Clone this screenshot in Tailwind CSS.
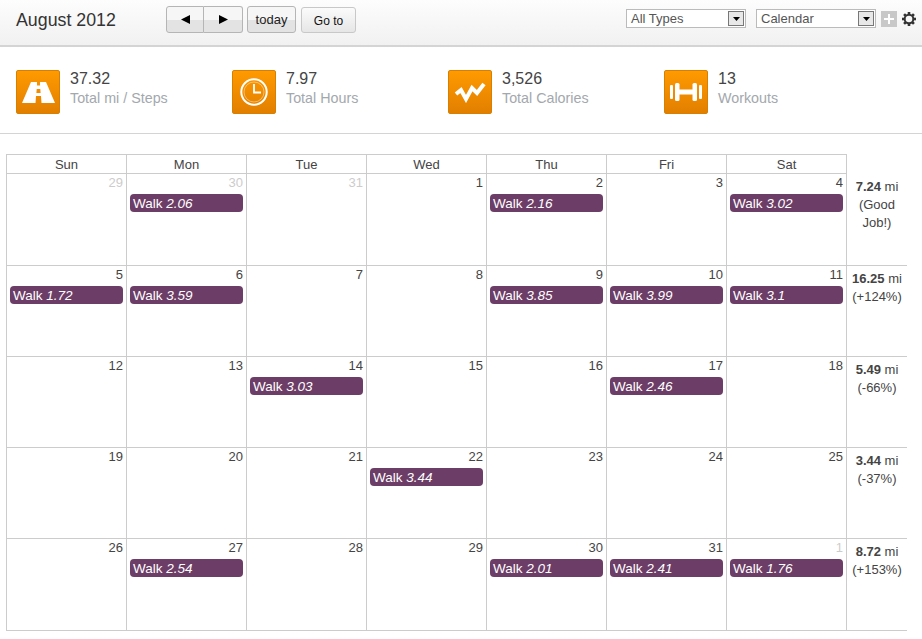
<!DOCTYPE html>
<html lang="en">
<head>
    <meta charset="UTF-8">
    <title>Calendar</title>
    <script src="https://cdn.jsdelivr.net/npm/@tailwindcss/browser@4"></script>
</head>
<body class="bg-white text-[#333] font-['Liberation_Sans',Arial,sans-serif] w-[922px] h-[639px] overflow-hidden">

    <!-- Toolbar -->
    <header class="h-[47px] border-b-2 border-[#d4d4d4] bg-gradient-to-b from-[#fdfdfd] to-[#f1f1f1] flex items-start relative">
        <h1 class="ml-4 mt-[10px] w-[150px] text-[17.800px] leading-5 text-[#333]">August 2012</h1>
        <div class="mt-[6px] flex h-[27px]">
            <button class="w-[38px] h-[27px] border border-[#b5b5b5] rounded-l-[3px] bg-[linear-gradient(#f6f6f6_50%,#e3e3e3_50%)] flex items-center justify-center">
                <svg width="9" height="9" viewBox="0 0 9 9"><path d="M0 4.500 9 0v9z" fill="#000"/></svg>
            </button>
            <button class="w-[39px] h-[27px] border border-l-0 border-[#b5b5b5] rounded-r-[3px] bg-[linear-gradient(#f6f6f6_50%,#e3e3e3_50%)] flex items-center justify-center">
                <svg width="9" height="9" viewBox="0 0 9 9"><path d="M9 4.500 0 0v9z" fill="#000"/></svg>
            </button>
            <button class="ml-[4px] w-[49px] h-[27px] border border-[#b5b5b5] rounded-[3px] bg-[linear-gradient(#f6f6f6_50%,#e3e3e3_50%)] text-[13px] text-[#222]">today</button>
            <button class="ml-[5px] mt-[1px] w-[55px] h-[26px] border border-[#c8c8c8] rounded-[3px] bg-gradient-to-b from-[#fbfbfb] to-[#e6e6e6] text-[12px] text-[#111] pt-[1px]">Go to</button>
        </div>
        <div class="absolute left-[626px] top-[9px] flex items-center">
            <div class="w-[120px] h-[19px] border border-[#bbb] bg-white flex justify-between items-center text-[13px] leading-4 text-[#555] pl-[4px] pr-[1px]">All Types
                <span class="w-[16px] h-[15px] border border-[#777] bg-[#e8e8e8] flex items-center justify-center"><svg width="7" height="4" viewBox="0 0 7 4"><path d="M0 0h7L3.500 4z" fill="#000"/></svg></span>
            </div>
            <div class="ml-[10px] w-[120px] h-[19px] border border-[#bbb] bg-white flex justify-between items-center text-[13px] leading-4 text-[#555] pl-[4px] pr-[1px]">Calendar
                <span class="w-[16px] h-[15px] border border-[#777] bg-[#e8e8e8] flex items-center justify-center"><svg width="7" height="4" viewBox="0 0 7 4"><path d="M0 0h7L3.500 4z" fill="#000"/></svg></span>
            </div>
            <span class="ml-[5px] w-[16px] h-[16px] bg-[#c8c8c8] flex items-center justify-center">
                <svg width="10" height="10" viewBox="0 0 10 10"><path d="M4 0h2v4h4v2H6v4H4V6H0V4h4z" fill="#fff"/></svg>
            </span>
            <svg class="ml-[5px]" width="14" height="14" viewBox="0 0 14 14">
                <g fill="#333"><rect x="5.700" y="0" width="2.600" height="14"/><rect x="0" y="5.700" width="14" height="2.600"/><rect x="5.700" y="0" width="2.600" height="14" transform="rotate(45 7 7)"/><rect x="5.700" y="0" width="2.600" height="14" transform="rotate(-45 7 7)"/></g>
                <circle cx="7" cy="7" r="4.300" fill="none" stroke="#333" stroke-width="2"/>
                <circle cx="7" cy="7" r="3.300" fill="#f6f6f6"/>
            </svg>
        </div>
    </header>

    <!-- Totals -->
    <section class="h-[87px] border-b border-[#d4d4d4] pl-4 pt-[23px] flex items-start">
        <div class="w-[216px] flex">
            <span class="w-[44px] h-[44px] rounded-[2px] border border-[#d87f00] bg-gradient-to-b from-[#ff9a00] to-[#e27f00] flex items-center justify-center">
                <svg width="33" height="21" viewBox="0 0 33 21"><path d="M9 0h6v3.500h3V0h6l9 21H19.500L19 14h-5l-.5 7H0zM14.700 7l-.3 4h4.200l-.3-4z" fill="#fff" fill-rule="evenodd"/></svg>
            </span>
            <div class="ml-[10px]">
                <p class="text-[16px] leading-5 text-[#444] -mt-[1px]">37.32</p>
                <p class="text-[14.300px] leading-[19px] text-[#a3a8ad]">Total mi / Steps</p>
            </div>
        </div>
        <div class="w-[216px] flex">
            <span class="w-[44px] h-[44px] rounded-[2px] border border-[#d87f00] bg-gradient-to-b from-[#ff9a00] to-[#e27f00] flex items-center justify-center">
                <svg width="28" height="28" viewBox="0 0 28 28" fill="none" stroke="#fff"><circle cx="14" cy="14" r="12.700" stroke-width="2"/><circle cx="14" cy="14" r="10" stroke-width=".6" opacity=".7"/><path d="M14 6v8.500h7" stroke-width="1.800"/></svg>
            </span>
            <div class="ml-[10px]">
                <p class="text-[16px] leading-5 text-[#444] -mt-[1px]">7.97</p>
                <p class="text-[14.300px] leading-[19px] text-[#a3a8ad]">Total Hours</p>
            </div>
        </div>
        <div class="w-[216px] flex">
            <span class="w-[44px] h-[44px] rounded-[2px] border border-[#d87f00] bg-gradient-to-b from-[#ff9a00] to-[#e27f00] flex items-center justify-center">
                <svg width="32" height="21" viewBox="0 0 32 21" fill="none" stroke="#fff" stroke-width="4"><path d="M2 12l5-4 5 9 6-11 5 5 7-9"/></svg>
            </span>
            <div class="ml-[10px]">
                <p class="text-[16px] leading-5 text-[#444] -mt-[1px]">3,526</p>
                <p class="text-[14.300px] leading-[19px] text-[#a3a8ad]">Total Calories</p>
            </div>
        </div>
        <div class="flex">
            <span class="w-[44px] h-[44px] rounded-[2px] border border-[#d87f00] bg-gradient-to-b from-[#ff9a00] to-[#e27f00] flex items-center justify-center">
                <svg width="32" height="18" viewBox="0 0 32 18" fill="#fff"><rect x="0" y="2" width="3" height="14" rx="1"/><rect x="5" y="0" width="4.500" height="18" rx="1.500"/><rect x="9" y="6.500" width="14" height="5"/><rect x="22.500" y="0" width="4.500" height="18" rx="1.500"/><rect x="29" y="2" width="3" height="14" rx="1"/></svg>
            </span>
            <div class="ml-[10px]">
                <p class="text-[16px] leading-5 text-[#444] -mt-[1px]">13</p>
                <p class="text-[14.300px] leading-[19px] text-[#a3a8ad]">Workouts</p>
            </div>
        </div>
    </section>

    <!-- Calendar -->
    <div id="cal" class="ml-[6px] mt-[20px] w-[901px] grid grid-cols-[121px_120px_120px_120px_120px_120px_120px_60px]"></div>

    <script>
        const weeks = [
            { days: [[29, 0], [30, 0, '2.06'], [31, 0], [1, 1], [2, 1, '2.16'], [3, 1], [4, 1, '3.02']], total: '7.24', note: ['(Good', 'Job!)'], h: 'h-[92px]' },
            { days: [[5, 1, '1.72'], [6, 1, '3.59'], [7, 1], [8, 1], [9, 1, '3.85'], [10, 1, '3.99'], [11, 1, '3.1']], total: '16.25', note: ['(+124%)'], h: 'h-[91px]' },
            { days: [[12, 1], [13, 1], [14, 1, '3.03'], [15, 1], [16, 1], [17, 1, '2.46'], [18, 1]], total: '5.49', note: ['(-66%)'], h: 'h-[91px]' },
            { days: [[19, 1], [20, 1], [21, 1], [22, 1, '3.44'], [23, 1], [24, 1], [25, 1]], total: '3.44', note: ['(-37%)'], h: 'h-[91px]' },
            { days: [[26, 1], [27, 1, '2.54'], [28, 1], [29, 1], [30, 1, '2.01'], [31, 1, '2.41'], [1, 0, '1.76']], total: '8.72', note: ['(+153%)'], h: 'h-[92px]' }
        ];
        let html = '';
        ['Sun', 'Mon', 'Tue', 'Wed', 'Thu', 'Fri', 'Sat'].forEach((d, i) => {
            html += `<div class="h-[20px] border-y border-r border-[#ccc] ${i === 0 ? 'border-l' : ''} text-center text-[13px] leading-[19px] text-[#444]">${d}</div>`;
        });
        html += '<div></div>';
        weeks.forEach(w => {
            w.days.forEach((d, i) => {
                html += `<div class="${w.h} border-b border-r border-[#ccc] ${i === 0 ? 'border-l' : ''} px-[3px]">
                    <div class="text-right text-[13px] leading-[18px] ${d[1] ? 'text-[#444]' : 'text-[#ccc]'}">${d[0]}</div>
                    ${d[2] ? `<div class="mt-[2px] h-[18px] rounded-[4px] bg-[#6c3d66] text-white text-[13.500px] leading-[19px] pl-[3px]">Walk <i>${d[2]}</i></div>` : ''}
                </div>`;
            });
            html += `<div class="${w.h} border-b border-[#ccc] text-center text-[13px] leading-[18px] text-[#444] pt-[4px]"><b>${w.total}</b> mi${w.note.map(n => '<br>' + n).join('')}</div>`;
        });
        document.getElementById('cal').innerHTML = html;
    </script>
</body>
</html>
